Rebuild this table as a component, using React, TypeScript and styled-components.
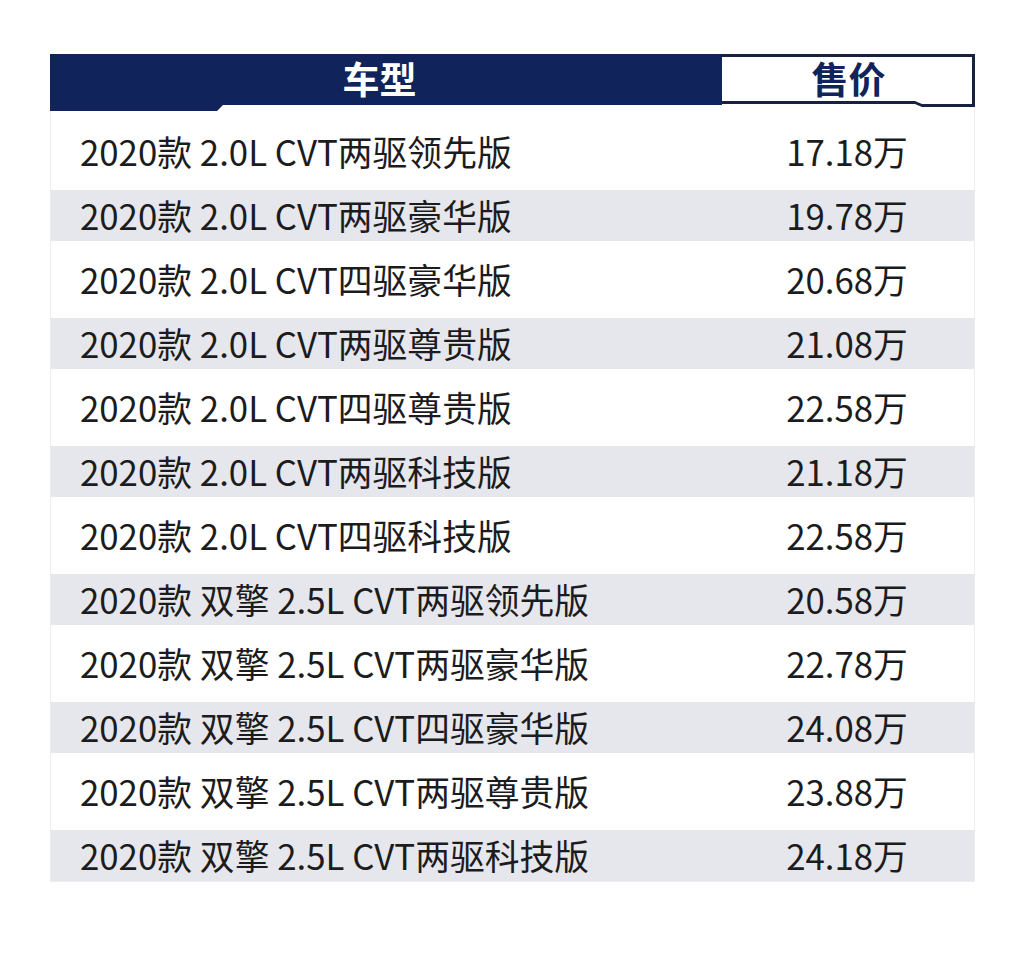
import React from "react";
import styled, { createGlobalStyle } from "styled-components";

const GlobalStyle = createGlobalStyle`
  html, body {
    margin: 0;
    padding: 0;
    background: #ffffff;
  }
  body {
    font-family: "Noto Sans CJK SC", "Noto Sans", sans-serif;
    color: #1c1c1e;
  }
`;

const Page = styled.div`
  width: 1024px;
  height: 954px;
  padding-top: 54px;
  box-sizing: border-box;
`;

const Table = styled.div`
  margin-left: 50px;
  width: 925px;
`;

const HeadRow = styled.div`
  display: flex;
  align-items: flex-start;
`;

const ModelHead = styled.div`
  width: 672px;
  height: 57px;
  background: #11235b;
  clip-path: polygon(0 0, 100% 0, 100% 51px, 173px 51px, 167px 57px, 0 57px);
  display: flex;
  justify-content: center;
  padding-top: 2px;
  padding-right: 13px;
  box-sizing: border-box;
  color: #ffffff;
  font-size: 37px;
  font-weight: 700;
  line-height: 45px;
`;

const PriceFrame = styled.div`
  width: 253px;
  height: 53px;
  background: #16223f;
  clip-path: polygon(0 0, 100% 0, 100% 53px, 200px 53px, 193px 50px, 0 50px);
  display: flex;
`;

const PriceFace = styled.div`
  flex: 1;
  background: #ffffff;
  clip-path: polygon(0 3px, calc(100% - 3px) 3px, calc(100% - 3px) 50px, 200px 50px, 193px 47px, 0 47px);
  display: flex;
  justify-content: center;
  padding-top: 2px;
  box-sizing: border-box;
  color: #11235b;
  font-size: 37px;
  font-weight: 700;
  line-height: 45px;
`;

const Body = styled.div`
  padding-top: 10px;
  border-left: 1px solid #ededf0;
  border-right: 1px solid #ededf0;
  border-bottom: 1px solid #ededf0;
  box-sizing: border-box;
  margin-top: -2px;
`;

const Row = styled.div<{ $striped: boolean }>`
  display: grid;
  grid-template-columns: 671px 1fr;
  align-items: center;
  height: 64px;
  box-sizing: border-box;
  padding: 6.5px 0;
  background: ${(p) => (p.$striped ? "#e6e7ec" : "transparent")};
  background-clip: content-box;
  font-size: 34.8px;
  line-height: 51px;

  &:last-child {
    height: 57.5px;
    padding-bottom: 0;
  }
`;

const ModelCell = styled.div`
  padding-left: 29px;
  white-space: nowrap;
`;

const PriceCell = styled.div`
  text-align: center;
  white-space: nowrap;
  padding-right: 2px;
`;

const rows: [string, string][] = [
  ["2020款 2.0L CVT两驱领先版", "17.18万"],
  ["2020款 2.0L CVT两驱豪华版", "19.78万"],
  ["2020款 2.0L CVT四驱豪华版", "20.68万"],
  ["2020款 2.0L CVT两驱尊贵版", "21.08万"],
  ["2020款 2.0L CVT四驱尊贵版", "22.58万"],
  ["2020款 2.0L CVT两驱科技版", "21.18万"],
  ["2020款 2.0L CVT四驱科技版", "22.58万"],
  ["2020款 双擎 2.5L CVT两驱领先版", "20.58万"],
  ["2020款 双擎 2.5L CVT两驱豪华版", "22.78万"],
  ["2020款 双擎 2.5L CVT四驱豪华版", "24.08万"],
  ["2020款 双擎 2.5L CVT两驱尊贵版", "23.88万"],
  ["2020款 双擎 2.5L CVT两驱科技版", "24.18万"],
];

export default function App() {
  return (
    <Page>
      <GlobalStyle />
      <Table>
        <HeadRow>
          <ModelHead>车型</ModelHead>
          <PriceFrame>
            <PriceFace>售价</PriceFace>
          </PriceFrame>
        </HeadRow>
        <Body>
          {rows.map(([model, price], i) => (
            <Row key={i} $striped={i % 2 === 1}>
              <ModelCell>{model}</ModelCell>
              <PriceCell>{price}</PriceCell>
            </Row>
          ))}
        </Body>
      </Table>
    </Page>
  );
}
